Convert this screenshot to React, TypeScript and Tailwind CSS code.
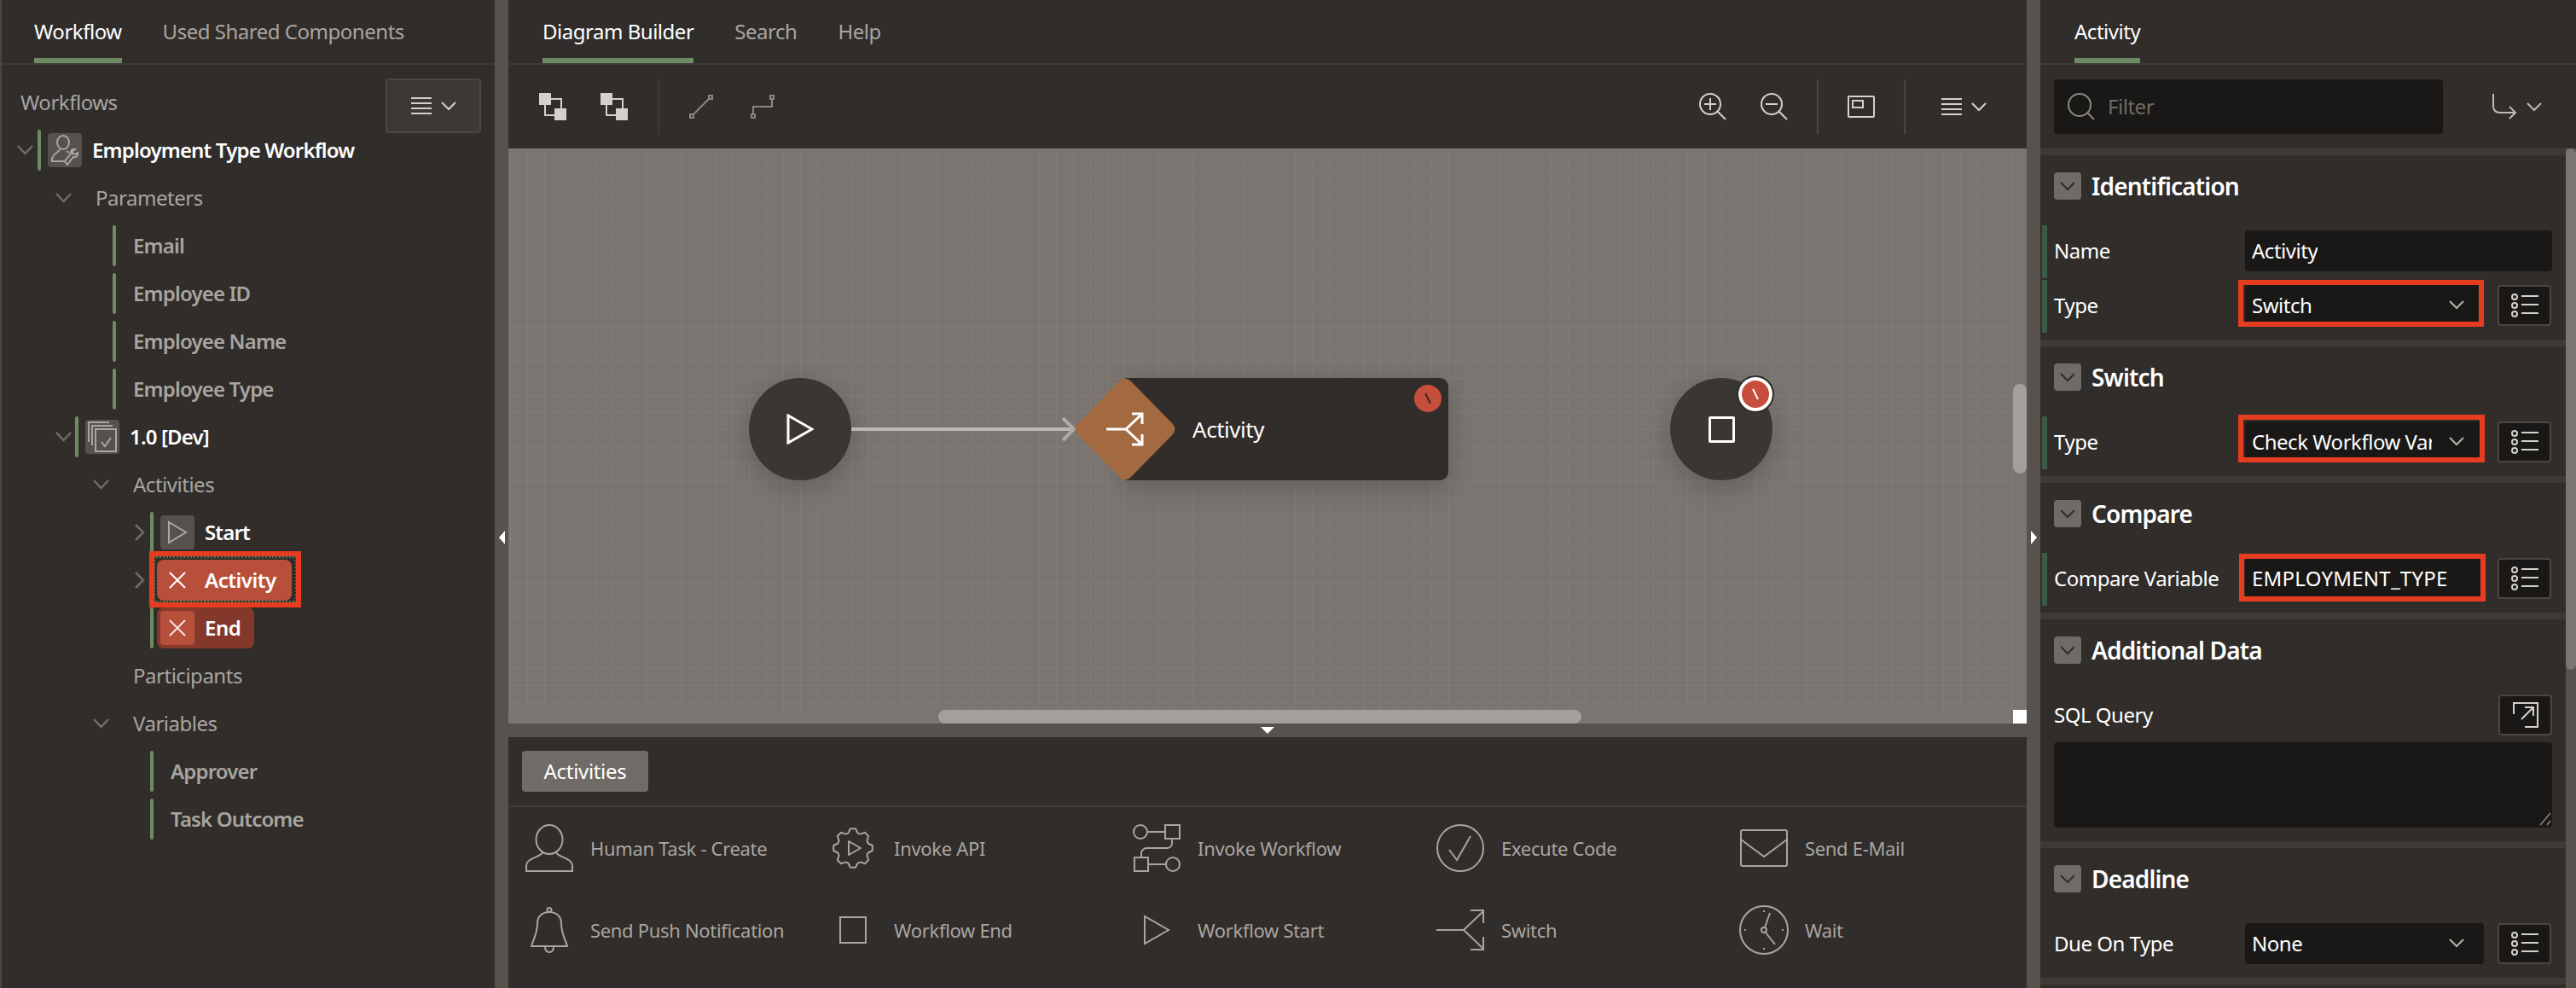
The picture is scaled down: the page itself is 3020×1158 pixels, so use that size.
import type { ReactNode } from "react";

function Chevron({ className = "" }: { className?: string }) {
  return (
    <svg width="18" height="11" viewBox="0 0 18 11" className={className} fill="none" stroke="currentColor" strokeWidth="2">
      <path d="M1 1l8 8 8-8" />
    </svg>
  );
}

function MenuIcon() {
  return (
    <div className="flex items-center gap-[11px] text-[#d4d1cd]">
      <svg width="24" height="22" viewBox="0 0 24 22" fill="none" stroke="currentColor" strokeWidth="2">
        <path d="M0 2h24M0 8h24M0 14h24M0 20h24" />
      </svg>
      <Chevron />
    </div>
  );
}

function Tab({ label, active }: { label: string; active?: boolean }) {
  return (
    <div
      className={`h-[74px] pt-[21px] text-[24px] leading-[32px] border-b-[6px] ${
        active ? "text-white border-[#6e8c63]" : "text-[#a8a5a1] border-transparent"
      }`}
    >
      {label}
    </div>
  );
}

function TreeChevron({ x, open }: { x: number; open: boolean }) {
  return (
    <span className="absolute top-1/2 -translate-y-1/2 text-[#6f6b66]" style={{ left: x }}>
      {open ? (
        <svg width="19" height="12" viewBox="0 0 19 12" fill="none" stroke="currentColor" strokeWidth="2.5" className="block">
          <path d="M1 1l8.5 9L18 1" />
        </svg>
      ) : (
        <svg width="12" height="20" viewBox="0 0 12 20" fill="none" stroke="currentColor" strokeWidth="2.5" className="block">
          <path d="M1 1l9 9-9 9" />
        </svg>
      )}
    </span>
  );
}

function TreeRow({
  indent,
  chevron,
  open,
  bar,
  children,
}: {
  indent: number;
  chevron?: number;
  open?: boolean;
  bar?: number;
  children: ReactNode;
}) {
  return (
    <div className="relative h-[56px] flex items-center" style={{ paddingLeft: indent }}>
      {chevron !== undefined && <TreeChevron x={chevron} open={!!open} />}
      {bar !== undefined && (
        <span className="absolute top-[4px] bottom-[4px] w-[4px] rounded-[2px] bg-[#6e8c63]" style={{ left: bar }} />
      )}
      {children}
    </div>
  );
}

function IconBox({ children, tone = "gray" }: { children: ReactNode; tone?: "gray" | "red" }) {
  return (
    <span
      className={`w-[40px] h-[40px] rounded-[4px] flex items-center justify-center shrink-0 ${
        tone === "gray" ? "bg-[#55514d] text-[#a9a6a2]" : "bg-[#b74f3b] text-[#f6e3de]"
      }`}
    >
      {children}
    </span>
  );
}

function CrossIcon() {
  return (
    <svg width="24" height="24" viewBox="0 0 24 24" fill="none" stroke="currentColor" strokeWidth="2">
      <path d="M3 3l18 18M21 3L3 21" />
    </svg>
  );
}

function LeftPanel() {
  const parameters = ["Email", "Employee ID", "Employee Name", "Employee Type"];
  return (
    <div className="w-[580px] shrink-0 bg-[#312d2a] border-l-2 border-[#4a4642] flex flex-col overflow-hidden">
      <div className="h-[76px] flex gap-[48px] pl-[38px] border-b-2 border-[#3e3a37]">
        <Tab label="Workflow" active />
        <Tab label="Used Shared Components" />
      </div>
      <div className="relative">
        <div className="absolute left-[450px] top-[16px] w-[112px] h-[64px] rounded-[4px] bg-[#3c3935] border-2 border-[#4a4642] flex items-center justify-center">
          <MenuIcon />
        </div>
        <div className="pl-[22px] h-[72px] pt-[26px] text-[24px] leading-[36px] text-[#a8a5a1]">Workflows</div>
        <div className="-ml-[2px] text-[24px] text-[#a8a5a1]">
          <TreeRow indent={56} chevron={20} open bar={44}>
            <IconBox>
              <svg width="34" height="36" viewBox="0 0 34 36" fill="none" stroke="currentColor" strokeWidth="2">
                <ellipse cx="15" cy="9" rx="7" ry="8" />
                <path d="M11 17c0 3-9 5-9 12v2h16M19 19l3 2" />
                <path d="M20 35l7-9c3 1 6-2 5-5l-3 2-3-1v-3l3-2c-3-1-6 2-5 5l-7 9z" />
              </svg>
            </IconBox>
            <span className="ml-[12px] font-semibold tracking-[-0.035em] text-white">Employment Type Workflow</span>
          </TreeRow>
          <TreeRow indent={112} chevron={65} open>
            <span>Parameters</span>
          </TreeRow>
          {parameters.map((p) => (
            <TreeRow key={p} indent={156} bar={132}>
              <span className="font-semibold tracking-[-0.035em]">{p}</span>
            </TreeRow>
          ))}
          <TreeRow indent={100} chevron={65} open bar={88}>
            <IconBox>
              <svg width="34" height="36" viewBox="0 0 34 36" fill="none" stroke="currentColor" strokeWidth="2">
                <path d="M1 24V1h24M5 28V5h24" />
                <path d="M9 35V9h24v26z" />
                <path d="M16 24l4 5 7-10" />
              </svg>
            </IconBox>
            <span className="ml-[12px] font-semibold tracking-[-0.035em] text-white">1.0 [Dev]</span>
          </TreeRow>
          <TreeRow indent={156} chevron={109} open>
            <span>Activities</span>
          </TreeRow>
          <TreeRow indent={188} chevron={158} bar={176}>
            <IconBox>
              <svg width="24" height="28" viewBox="0 0 24 28" fill="none" stroke="currentColor" strokeWidth="2">
                <path d="M2 2v24l20-12z" />
              </svg>
            </IconBox>
            <span className="ml-[12px] font-semibold tracking-[-0.035em] text-white">Start</span>
          </TreeRow>
          <TreeRow indent={184} chevron={158}>
            <span className="relative w-[158px] h-[48px] rounded-[8px] bg-[#b74f3b] flex items-center pl-[4px]">
              <span className="w-[40px] flex justify-center text-white">
                <CrossIcon />
              </span>
              <span className="ml-[12px] font-semibold tracking-[-0.02em] text-white">Activity</span>
            </span>
            <span className="absolute left-[180px] top-0 w-[168px] h-[54px] border-2 border-dotted border-[#3f7a5a]" />
            <span className="absolute left-[175px] top-[-6px] w-[178px] h-[66px] border-[6px] border-[#e63c1f]" />
          </TreeRow>
          <TreeRow indent={184} bar={176}>
            <span className="w-[114px] h-[48px] rounded-[8px] bg-[#84382b] flex items-center pl-[4px]">
              <IconBox tone="red">
                <CrossIcon />
              </IconBox>
              <span className="ml-[12px] font-semibold tracking-[-0.02em] text-white">End</span>
            </span>
          </TreeRow>
          <TreeRow indent={156}>
            <span>Participants</span>
          </TreeRow>
          <TreeRow indent={156} chevron={109} open>
            <span>Variables</span>
          </TreeRow>
          {["Approver", "Task Outcome"].map((v) => (
            <TreeRow key={v} indent={200} bar={176}>
              <span className="font-semibold tracking-[-0.035em]">{v}</span>
            </TreeRow>
          ))}
        </div>
      </div>
    </div>
  );
}

function Toolbar() {
  return (
    <div className="h-[98px] flex items-center text-[#d4d1cd]">
      <svg width="32" height="32" viewBox="0 0 32 32" className="ml-[36px]" fill="none" stroke="currentColor" strokeWidth="2">
        <path d="M7 7h19v19H7z" />
        <path d="M0 0h14v14H0zM18 18h14v14H18z" fill="currentColor" stroke="none" />
      </svg>
      <svg width="32" height="32" viewBox="0 0 32 32" className="ml-[40px]" fill="none" stroke="currentColor" strokeWidth="2">
        <path d="M7 14v12h14M14 7h12v14" />
        <path d="M0 0h14v14H0zM18 18h14v14H18z" fill="currentColor" stroke="none" />
      </svg>
      <div className="ml-[35px] w-[2px] h-[64px] bg-[#3e3a37]" />
      <svg width="28" height="28" viewBox="0 0 28 28" className="ml-[35px] text-[#8a8682]" fill="none" stroke="currentColor" strokeWidth="2">
        <path d="M5 23L23 5" />
        <path d="M1 23h4v4H1zM23 1h4v4h-4z" />
      </svg>
      <svg width="28" height="28" viewBox="0 0 28 28" className="ml-[44px] text-[#8a8682]" fill="none" stroke="currentColor" strokeWidth="2">
        <path d="M3 23V14h22V5" />
        <path d="M1 23h4v4H1zM23 1h4v4h-4z" />
      </svg>
      <div className="ml-auto flex items-center">
        <svg width="32" height="32" viewBox="0 0 32 32" fill="none" stroke="currentColor" strokeWidth="2">
          <circle cx="13" cy="13" r="12" />
          <path d="M21.5 21.5L31 31M13 6v14M6 13h14" />
        </svg>
        <svg width="32" height="32" viewBox="0 0 32 32" className="ml-[40px]" fill="none" stroke="currentColor" strokeWidth="2">
          <circle cx="13" cy="13" r="12" />
          <path d="M21.5 21.5L31 31M6 13h14" />
        </svg>
        <div className="ml-[34px] w-[2px] h-[64px] bg-[#4a4642]" />
        <svg width="32" height="26" viewBox="0 0 32 26" className="ml-[34px]" fill="none" stroke="currentColor" strokeWidth="2">
          <rect x="1" y="1" width="30" height="24" rx="1" />
          <rect x="6" y="6" width="12" height="8" />
        </svg>
        <div className="ml-[34px] w-[2px] h-[64px] bg-[#4a4642]" />
        <div className="ml-[42px] mr-[47px]">
          <MenuIcon />
        </div>
      </div>
    </div>
  );
}

function ErrorBadge({ ring, slash, className }: { ring?: boolean; slash: string; className: string }) {
  return (
    <span
      className={`absolute rounded-full bg-[#c74e3c] flex items-center justify-center ${
        ring ? "border-4 border-white outline-2 outline-[#312d2a]" : ""
      } ${className}`}
    >
      <svg width="14" height="14" viewBox="0 0 14 14" fill="none" stroke={slash} strokeWidth="2">
        <path d="M4 1l6 12" />
      </svg>
    </span>
  );
}

function Canvas() {
  return (
    <div className="relative h-[674px] bg-[#7a7570] overflow-hidden">
      <div className="absolute left-0 top-0 w-[1763px] h-[658px] bg-[linear-gradient(#817c77_1px,transparent_1px),linear-gradient(90deg,#817c77_1px,transparent_1px)] bg-[size:20px_20px] bg-[position:2px_9px]" />

      {/* start */}
      <div className="absolute left-[282px] top-[269px] w-[120px] h-[120px] rounded-full bg-[#3a3632] shadow-[0_8px_32px_rgba(0,0,0,0.22)] flex items-center justify-center">
        <svg width="32" height="36" viewBox="0 0 32 36" fill="none" stroke="white" strokeWidth="3">
          <path d="M2 2v32l28-16z" />
        </svg>
      </div>

      {/* connector */}
      <div className="absolute left-[402px] top-[327px] w-[262px] h-[4px] bg-[#bdb9b4]" />
      <svg width="18" height="30" viewBox="0 0 18 30" className="absolute left-[648px] top-[314px]" fill="none" stroke="#aeaaa5" strokeWidth="4">
        <path d="M2 2l13 13L2 28" />
      </svg>

      {/* activity */}
      <div className="absolute left-[723px] top-[269px] w-[379px] h-[120px] rounded-r-[10px] bg-[#312d2a] shadow-[0_8px_32px_rgba(0,0,0,0.22)] flex items-center pl-[79px]">
        <span className="text-white text-[26px]">Activity</span>
        <ErrorBadge slash="#312d2a" className="left-[339px] top-[8px] w-[32px] h-[32px]" />
      </div>
      <svg width="118" height="120" viewBox="0 0 118 120" className="absolute left-[664px] top-[269px]">
        <path d="M52 4Q59-3 66 4L114 53Q121 60 114 67L66 116Q59 123 52 116L4 67Q-3 60 4 53Z" fill="#a36a42" />
        <path d="M37 60h23M60 60l19-18M60 60l19 18M67 42h12v12M67 78h12V66" fill="none" stroke="white" strokeWidth="3" />
      </svg>

      {/* end */}
      <div className="absolute left-[1362px] top-[269px] w-[120px] h-[120px] rounded-full bg-[#3a3632] shadow-[0_8px_32px_rgba(0,0,0,0.22)] flex items-center justify-center">
        <span className="w-[31px] h-[31px] border-[3px] border-white rounded-[2px]" />
        <ErrorBadge ring slash="white" className="left-[80px] top-[-1px] w-[40px] h-[40px]" />
      </div>

      {/* scrollbars */}
      <div className="absolute left-[504px] top-[658px] w-[754px] h-[16px] rounded-[8px] bg-[#a3a09b]" />
      <div className="absolute left-[1764px] top-[276px] w-[16px] h-[105px] rounded-[8px] bg-[#a3a09b]" />
      <div className="absolute left-[1764px] top-[658px] w-[16px] h-[16px] bg-white" />
    </div>
  );
}

// eight toothed outline for the Invoke API icon
function gearPath() {
  const pts: string[] = [];
  for (let i = 0; i < 8; i++) {
    const a = (i * Math.PI) / 4 - Math.PI / 2;
    [
      [18.5, -0.3],
      [23, -0.13],
      [23, 0.13],
      [18.5, 0.3],
    ].forEach(([r, d]) => {
      pts.push(`${(24 + r * Math.cos(a + d)).toFixed(1)} ${(24 + r * Math.sin(a + d)).toFixed(1)}`);
    });
  }
  return `M${pts.join("L")}Z`;
}

function Palette() {
  const s = { fill: "none", stroke: "#a8a5a1", strokeWidth: 2 };
  const items: { label: string; icon: ReactNode }[] = [
    {
      label: "Human Task - Create",
      icon: (
        <svg width="56" height="56" viewBox="0 0 56 56" {...s}>
          <ellipse cx="28" cy="18" rx="15.5" ry="17" />
          <path d="M20 33c0 5-19 6-19 16v6h54v-6c0-10-19-11-19-16" />
        </svg>
      ),
    },
    {
      label: "Invoke API",
      icon: (
        <svg width="48" height="48" viewBox="0 0 48 48" {...s} strokeLinejoin="round">
          <path d={gearPath()} />
          <path d="M19 16v16l14-8z" />
        </svg>
      ),
    },
    {
      label: "Invoke Workflow",
      icon: (
        <svg width="56" height="56" viewBox="0 0 56 56" {...s}>
          <circle cx="9" cy="9" r="8" />
          <path d="M17 9h21M38 1h17v16H38zM46 17v5c0 4-3 6-6 6H16c-3 0-6 3-6 6v5M2 39h16v16H2zM18 47h21" />
          <circle cx="47" cy="47" r="8" />
        </svg>
      ),
    },
    {
      label: "Execute Code",
      icon: (
        <svg width="56" height="56" viewBox="0 0 56 56" {...s}>
          <circle cx="28" cy="28" r="27" />
          <path d="M15 30l9 12 16-28" />
        </svg>
      ),
    },
    {
      label: "Send E-Mail",
      icon: (
        <svg width="56" height="44" viewBox="0 0 56 44" {...s}>
          <rect x="1" y="1" width="54" height="42" rx="2" />
          <path d="M1 12l27 20 27-20" />
        </svg>
      ),
    },
    {
      label: "Send Push Notification",
      icon: (
        <svg width="46" height="54" viewBox="0 0 46 54" {...s}>
          <path d="M2 46c3-10 7-15 7-27C9 11 15 6 23 6s14 5 14 13c0 12 4 17 7 27z" />
          <circle cx="23" cy="3.5" r="2.5" />
          <path d="M18 46c0 5 2 7 5 7s5-2 5-7" />
        </svg>
      ),
    },
    {
      label: "Workflow End",
      icon: (
        <svg width="32" height="32" viewBox="0 0 32 32" {...s}>
          <rect x="1" y="1" width="30" height="30" />
        </svg>
      ),
    },
    {
      label: "Workflow Start",
      icon: (
        <svg width="32" height="36" viewBox="0 0 32 36" {...s}>
          <path d="M2 2v32l28-16z" />
        </svg>
      ),
    },
    {
      label: "Switch",
      icon: (
        <svg width="56" height="48" viewBox="0 0 56 48" {...s}>
          <path d="M0 24h32M32 24L55 2M32 24l23 22M40 1h15v15M40 47h15V32" />
        </svg>
      ),
    },
    {
      label: "Wait",
      icon: (
        <svg width="58" height="58" viewBox="0 0 58 58" {...s}>
          <circle cx="29" cy="29" r="28" />
          <circle cx="29" cy="29" r="3" />
          <path d="M30 26l6-17M31 32l11 14M29 6v2M29 50v2M6 29h2M50 29h2" />
        </svg>
      ),
    },
  ];
  return (
    <div className="flex-1 bg-[#312d2a] flex flex-col tracking-[-0.02em]">
      <div className="h-[82px] pl-[16px] pt-[16px] border-b-2 border-[#3e3a37]">
        <div className="w-[148px] h-[48px] rounded-[4px] bg-[#6f6b66] text-white text-[24px] flex items-center justify-center">
          Activities
        </div>
      </div>
      <div className="grid grid-cols-[repeat(5,356px)] grid-rows-[96px_96px] pl-[16px]">
        {items.map((item) => (
          <div key={item.label} className="flex items-center">
            <div className="w-[64px] flex justify-center shrink-0">{item.icon}</div>
            <span className="ml-[16px] text-[22px] text-[#a8a5a1] whitespace-nowrap">{item.label}</span>
          </div>
        ))}
      </div>
    </div>
  );
}

function Section({ title, children }: { title: string; children: ReactNode }) {
  return (
    <div className="border-t-8 border-[#3e3a36]">
      <div className="flex items-center h-[72px] mb-[8px] pl-[16px]">
        <span className="w-[32px] h-[32px] rounded-[4px] bg-[#6f6b66] flex items-center justify-center text-[#312d2a]">
          <Chevron />
        </span>
        <span className="ml-[12px] text-white text-[28px] font-semibold tracking-[-0.03em]">{title}</span>
      </div>
      {children}
    </div>
  );
}

function ListButton() {
  return (
    <span className="ml-[16px] w-[63px] h-[48px] rounded-[4px] bg-[#1a1816] border-2 border-[#4a4642] flex items-center justify-center shrink-0">
      <svg width="32" height="28" viewBox="0 0 32 28" fill="none" stroke="#d4d1cd" strokeWidth="2">
        <circle cx="4" cy="4" r="3" />
        <circle cx="4" cy="14" r="3" />
        <circle cx="4" cy="24" r="3" />
        <path d="M12 3h20M12 13h20M12 23h20" />
      </svg>
    </span>
  );
}

function Field({
  label,
  value,
  select,
  list,
  mark,
  bar,
  wide,
  valueClass = "",
}: {
  label: string;
  value: string;
  select?: boolean;
  list?: boolean;
  mark?: string;
  bar?: boolean;
  wide?: boolean;
  valueClass?: string;
}) {
  return (
    <div className="relative h-[64px] flex items-center pl-[16px] pr-[16px]">
      {bar && <span className="absolute left-[2px] top-[2px] bottom-0 w-[6px] bg-[#3c5a44]" />}
      <span className="w-[224px] text-[24px] text-white whitespace-nowrap">{label}</span>
      <span
        className={`relative h-[48px] rounded-[4px] bg-[#1a1816] flex items-center pl-[8px] text-white text-[24px] ${
          wide ? "flex-1" : "w-[280px]"
        }`}
      >
        {mark && <span className={`absolute border-[6px] border-[#e63c1f] ${mark}`} />}
        <span className={`whitespace-nowrap overflow-hidden ${valueClass}`}>{value}</span>
        {select && <Chevron className="absolute right-[23px] top-[18px] text-[#b5b2ae]" />}
      </span>
      {list && <ListButton />}
    </div>
  );
}

function RightPanel() {
  return (
    <div className="flex-1 bg-[#312d2a] flex flex-col overflow-hidden">
      <div className="h-[76px] pl-[40px] border-b-2 border-[#3e3a37] flex">
        <Tab label="Activity" active />
      </div>
      <div className="h-[98px] flex items-center pl-[16px]">
        <div className="w-[456px] h-[64px] rounded-[4px] bg-[#1a1816] flex items-center pl-[16px] text-[#6f6b66] text-[24px]">
          <svg width="32" height="32" viewBox="0 0 32 32" fill="none" stroke="#8a8682" strokeWidth="2">
            <circle cx="14" cy="14" r="13" />
            <path d="M23 23l8 8" />
          </svg>
          <span className="ml-[15px]">Filter</span>
        </div>
        <svg width="30" height="30" viewBox="0 0 30 30" className="ml-[58px] text-[#bdbab6]" fill="none" stroke="currentColor" strokeWidth="2">
          <path d="M1 0v14c0 5 3 8 8 8h18M20 15l7 7-7 7" />
        </svg>
        <Chevron className="ml-[10px] text-[#bdbab6]" />
      </div>
      <div className="flex flex-1">
        <div className="w-[616px] shrink-0">
          <Section title="Identification">
            <Field label="Name" value="Activity" wide bar />
            <Field label="Type" value="Switch" select list bar mark="-left-[8px] -top-[6px] right-0 -bottom-[1px]" />
            <div className="h-[8px]" />
          </Section>
          <Section title="Switch">
            <Field
              label="Type"
              value="Check Workflow Variable"
              select
              list
              bar
              valueClass="w-[211px]"
              mark="-left-[8px] -top-[8px] -right-[1px] bottom-0"
            />
            <div className="h-[8px]" />
          </Section>
          <Section title="Compare">
            <Field
              label="Compare Variable"
              value="EMPLOYMENT_TYPE"
              list
              bar
              valueClass="tracking-[0.01em]"
              mark="-left-[7px] -top-[5px] -right-[2px] -bottom-[3px]"
            />
            <div className="h-[8px]" />
          </Section>
          <Section title="Additional Data">
            <div className="h-[64px] pl-[16px] pr-[16px] flex items-center justify-between text-white text-[24px]">
              <span>SQL Query</span>
              <span className="w-[63px] h-[48px] rounded-[4px] bg-[#1a1816] border-2 border-[#4a4642] flex items-center justify-center">
                <svg width="30" height="30" viewBox="0 0 30 30" fill="none" stroke="#d4d1cd" strokeWidth="2">
                  <path d="M1 14V1h28v28H14M10 20L24 6M14 6h10v10" />
                </svg>
              </span>
            </div>
            <div className="relative mx-[16px] h-[100px] rounded-[4px] bg-[#1a1816]">
              <svg width="14" height="16" viewBox="0 0 14 16" className="absolute right-[1px] bottom-[2px]" fill="none" stroke="#8a8682" strokeWidth="1.5">
                <path d="M1 15L13 1M9 15l4-5" />
              </svg>
            </div>
            <div className="h-[16px]" />
          </Section>
          <Section title="Deadline">
            <Field label="Due On Type" value="None" select list />
            <div className="h-[8px]" />
          </Section>
          <div className="border-t-8 border-[#3e3a36]" />
        </div>
        <div className="w-[12px] bg-[#57524e]">
          <div className="h-[611px] rounded-[6px] bg-[#7a7570]" />
        </div>
      </div>
    </div>
  );
}

export default function App() {
  return (
    <div className="font-['Noto_Sans',sans-serif] tracking-[-0.03em] w-[3020px] h-[1158px] flex bg-[#57524e] overflow-hidden">
      <LeftPanel />
      <div className="w-[16px] shrink-0 relative">
        <span className="absolute left-[5px] top-[622px] border-y-[8px] border-y-transparent border-r-[7px] border-r-white" />
      </div>
      <div className="w-[1780px] shrink-0 flex flex-col">
        <div className="bg-[#312d2a]">
          <div className="h-[76px] flex gap-[48px] pl-[40px] border-b-2 border-[#3e3a37]">
            <Tab label="Diagram Builder" active />
            <Tab label="Search" />
            <Tab label="Help" />
          </div>
          <Toolbar />
        </div>
        <Canvas />
        <div className="h-[16px] shrink-0 flex justify-center pt-[4px] bg-[#57524e]">
          <span className="border-x-[8px] border-x-transparent border-t-[8px] border-t-white" />
        </div>
        <Palette />
      </div>
      <div className="w-[16px] shrink-0 relative">
        <span className="absolute left-[5px] top-[622px] border-y-[8px] border-y-transparent border-l-[7px] border-l-white" />
      </div>
      <RightPanel />
    </div>
  );
}
